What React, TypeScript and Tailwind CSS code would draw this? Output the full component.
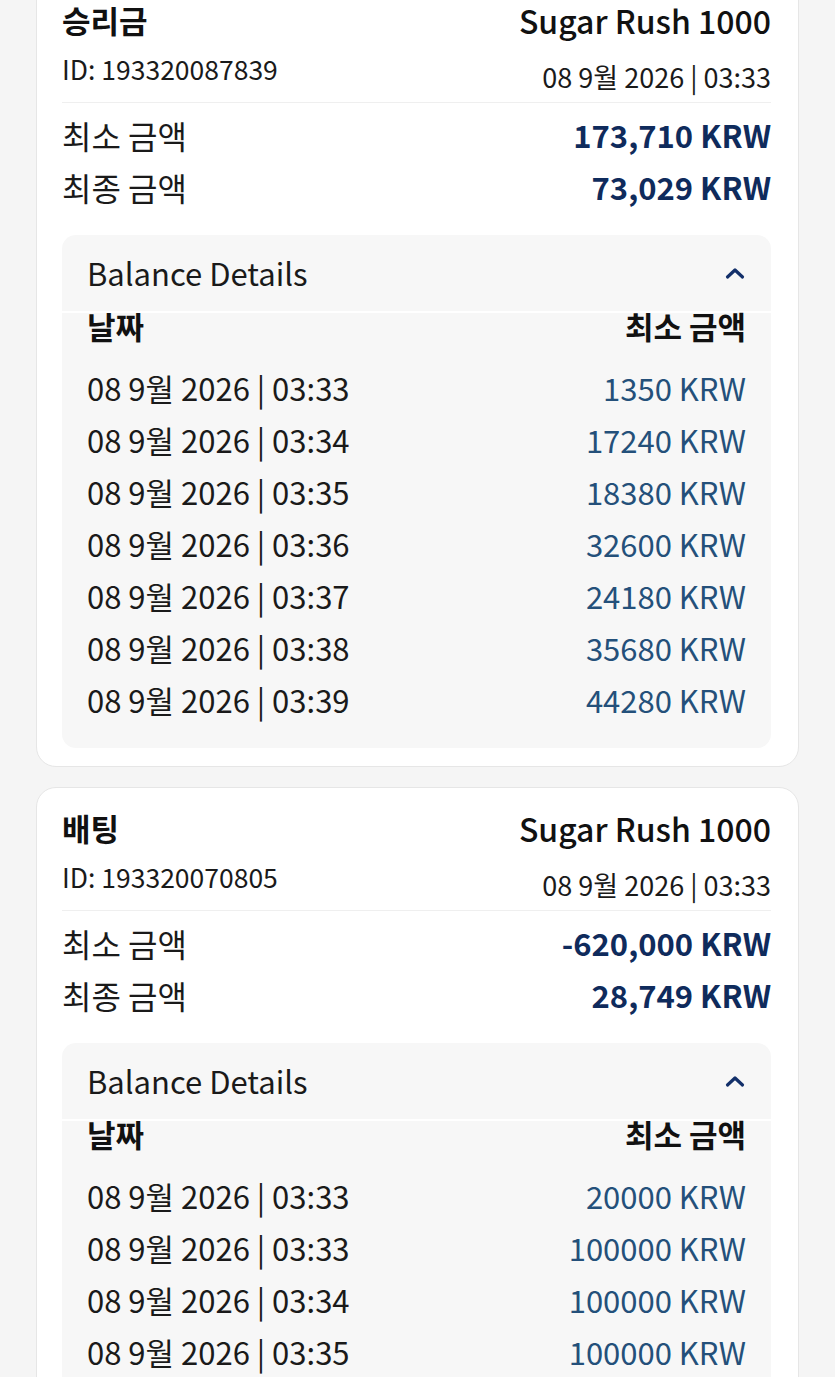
import React from "react";

type Row = { date: string; amount: string };

type Tx = {
  kind: string;
  id: string;
  game: string;
  date: string;
  minAmount: string;
  finalAmount: string;
  rows: Row[];
};

const txs: Tx[] = [
  {
    kind: "승리금",
    id: "193320087839",
    game: "Sugar Rush 1000",
    date: "08 9월 2026 | 03:33",
    minAmount: "173,710 KRW",
    finalAmount: "73,029 KRW",
    rows: [
      { date: "08 9월 2026 | 03:33", amount: "1350 KRW" },
      { date: "08 9월 2026 | 03:34", amount: "17240 KRW" },
      { date: "08 9월 2026 | 03:35", amount: "18380 KRW" },
      { date: "08 9월 2026 | 03:36", amount: "32600 KRW" },
      { date: "08 9월 2026 | 03:37", amount: "24180 KRW" },
      { date: "08 9월 2026 | 03:38", amount: "35680 KRW" },
      { date: "08 9월 2026 | 03:39", amount: "44280 KRW" },
    ],
  },
  {
    kind: "배팅",
    id: "193320070805",
    game: "Sugar Rush 1000",
    date: "08 9월 2026 | 03:33",
    minAmount: "-620,000 KRW",
    finalAmount: "28,749 KRW",
    rows: [
      { date: "08 9월 2026 | 03:33", amount: "20000 KRW" },
      { date: "08 9월 2026 | 03:33", amount: "100000 KRW" },
      { date: "08 9월 2026 | 03:34", amount: "100000 KRW" },
      { date: "08 9월 2026 | 03:35", amount: "100000 KRW" },
      { date: "08 9월 2026 | 03:36", amount: "100000 KRW" },
    ],
  },
];

function ChevronUp() {
  return (
    <svg width="22" height="14" viewBox="0 0 22 14" fill="none">
      <path
        d="M3.5 11 L11 4 L18.5 11"
        stroke="#13306a"
        strokeWidth="3.2"
        strokeLinecap="round"
        strokeLinejoin="round"
      />
    </svg>
  );
}

function TxCard({ tx }: { tx: Tx }) {
  return (
    <div className="bg-white border border-[#e6e6e6] rounded-[20px] pl-[25px] pr-[27px] pt-[19px] pb-[18px]">
      <div className="flex justify-between border-b border-[#efefef] pb-[7px]">
        <div className="flex flex-col">
          <div className="text-[31px] leading-[42px] font-bold text-[#111]">{tx.kind}</div>
          <div className="text-[26.5px] leading-[36px] mt-[10px] text-[#1a1a1a]">ID: {tx.id}</div>
        </div>
        <div className="flex flex-col items-end">
          <div className="text-[32px] leading-[42px] font-medium text-[#111]">{tx.game}</div>
          <div className="text-[27px] leading-[36px] mt-[18px] text-[#1a1a1a]">{tx.date}</div>
        </div>
      </div>
      <div className="mt-[6px]">
        <div className="flex justify-between leading-[52px]">
          <span className="text-[32px] text-[#1a1a1a]">최소 금액</span>
          <span className="text-[31px] font-semibold text-[#0f2b5c]">{tx.minAmount}</span>
        </div>
        <div className="flex justify-between leading-[52px]">
          <span className="text-[32px] text-[#1a1a1a]">최종 금액</span>
          <span className="text-[31px] font-semibold text-[#0f2b5c]">{tx.finalAmount}</span>
        </div>
      </div>
      <div className="mt-[22px] bg-[#f7f7f7] rounded-[14px] pb-[22px]">
        <div className="h-[78px] flex items-center justify-between px-[25px] border-b-2 border-white">
          <span className="text-[31px] text-[#1a1a1a]">Balance Details</span>
          <ChevronUp />
        </div>
        <div className="px-[25px]">
          <div className="flex justify-between text-[31px] leading-[26px] font-bold text-[#111]">
            <span>날짜</span>
            <span>최소 금액</span>
          </div>
          <div className="mt-[23px]">
            {tx.rows.map((r, i) => (
              <div key={i} className="flex justify-between text-[31px] leading-[52px]">
                <span className="text-[#1a1a1a]">{r.date}</span>
                <span className="text-[#24507a]">{r.amount}</span>
              </div>
            ))}
          </div>
        </div>
      </div>
    </div>
  );
}

export default function App() {
  return (
    <div
      className="h-screen bg-[#f5f5f5] overflow-hidden"
      style={{ fontFamily: '"Noto Sans CJK KR", "Noto Sans", sans-serif' }}
    >
      <div className="mx-[36px] -mt-[21px] flex flex-col gap-[20px]">
        {txs.map((tx, i) => (
          <TxCard key={i} tx={tx} />
        ))}
      </div>
    </div>
  );
}
